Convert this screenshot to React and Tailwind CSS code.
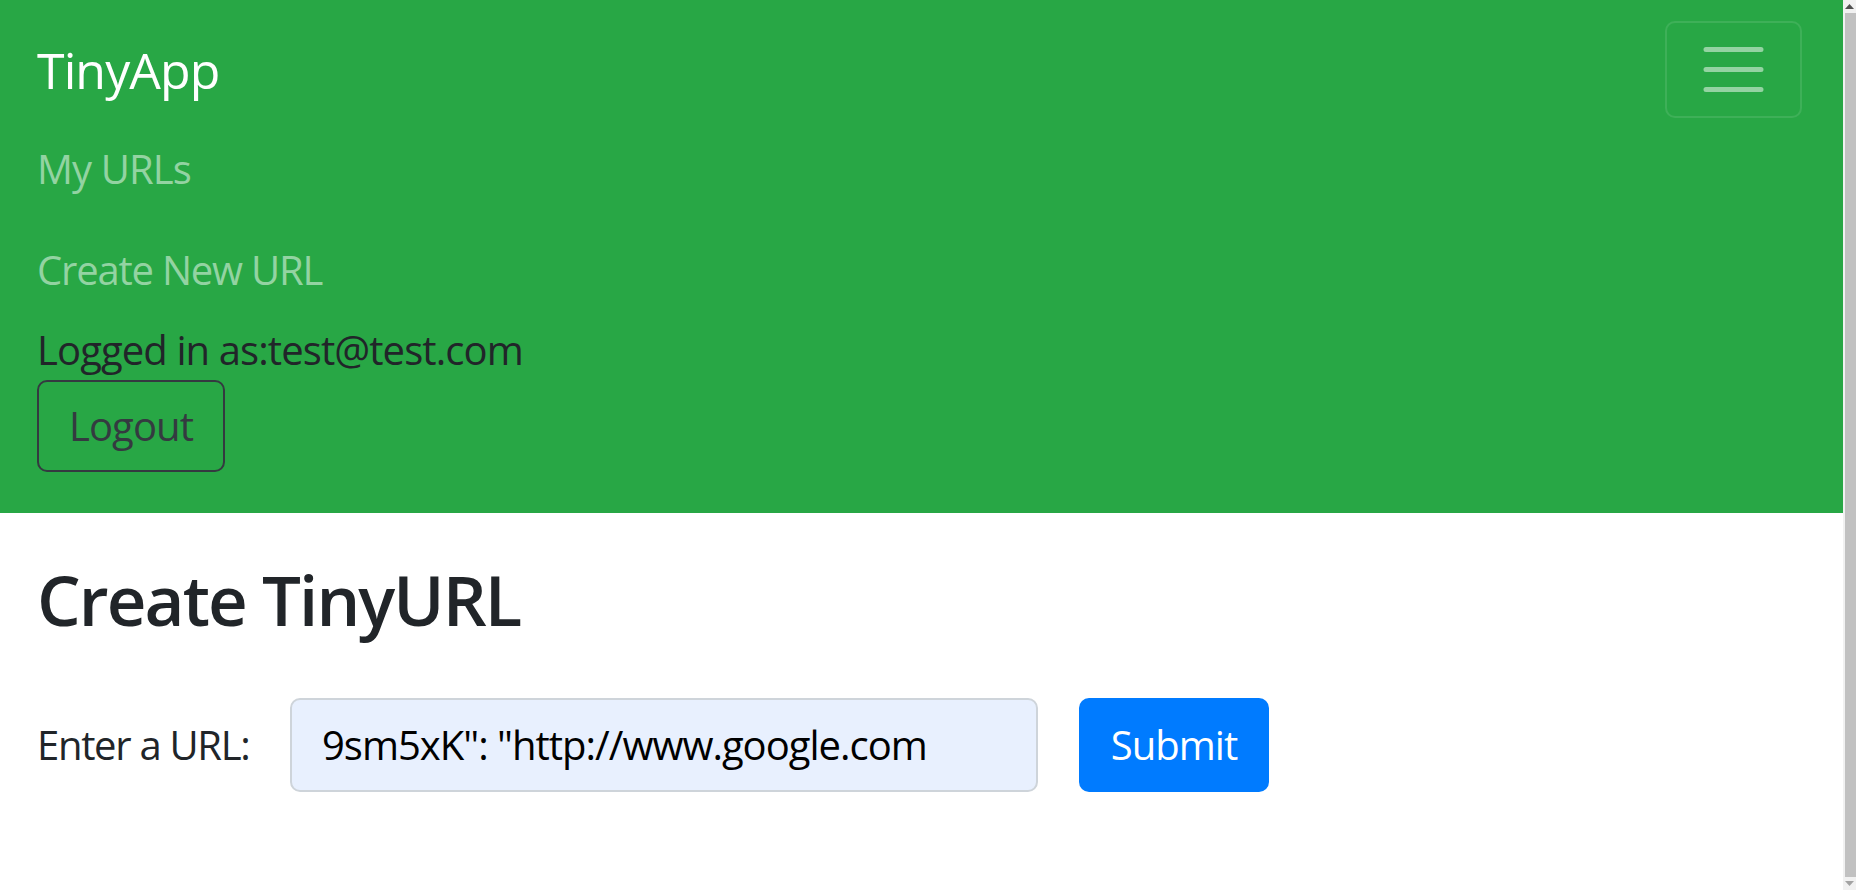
import React from "react";

const font = { fontFamily: '"Open Sans", "Noto Sans", sans-serif' };

function Toggler() {
  return (
    <button className="mt-px flex h-[97px] w-[137px] shrink-0 items-center justify-center rounded-[10px] border-[2.5px] border-white/10">
      <svg width="75" height="75" viewBox="0 0 30 30">
        <path d="M4 7h22M4 15h22M4 23h22" stroke="rgba(255,255,255,0.5)" strokeWidth="2" strokeLinecap="round" />
      </svg>
    </button>
  );
}

function Scrollbar() {
  return (
    <div className="flex h-[890px] w-[13px] shrink-0 flex-col bg-[#f1f1f1]">
      <div className="flex h-[13px] items-center justify-center">
        <svg width="9" height="5" viewBox="0 0 9 5"><path d="M4.5 0L9 5H0z" fill="#505050" /></svg>
      </div>
      <div className="ml-[2px] flex-1 bg-[#c1c1c1]" />
      <div className="flex h-[13px] items-center justify-center">
        <svg width="9" height="5" viewBox="0 0 9 5"><path d="M0 0h9L4.5 5z" fill="#a3a3a3" /></svg>
      </div>
    </div>
  );
}

export default function App() {
  return (
    <div className="flex h-[890px] w-full overflow-hidden bg-white text-[#212529]" style={font}>
      <div className="flex min-w-0 flex-1 flex-col">
        <nav className="bg-[#28a745] pb-[41px] pl-[37px] pr-[41px] pt-[20px]">
          <div className="flex items-start justify-between">
            <a className="pt-[13px] text-[50px] leading-[75px] tracking-[-0.9px] text-white">TinyApp</a>
            <Toggler />
          </div>
          <div className="flex flex-col text-[40px] leading-[60px] tracking-[-0.9px]">
            <a className="pb-[20px] pt-[21px] text-[#93d3a2]">My URLs</a>
            <a className="pb-[20px] pt-[21px] tracking-[-1.2px] text-[#93d3a2]">Create New URL</a>
            <div className="text-[#212529]">Logged in as:test@test.com</div>
            <button className="flex h-[92px] w-[188px] items-center justify-center rounded-[10px] border-[2.5px] border-[#343a40] text-[#343a40]">
              Logout
            </button>
          </div>
        </nav>
        <main className="pl-[37px]">
          <h1 className="mt-[44px] text-[69px] font-semibold leading-[84px] tracking-[-1.9px] text-[#212529]">Create TinyURL</h1>
          <div className="mt-[57px] flex items-center text-[40px] leading-[60px] tracking-[-1px]">
            <label className="w-[253px] shrink-0 tracking-[-1.3px] text-[#212529]">Enter a URL:</label>
            <div className="flex h-[94px] w-[748px] shrink-0 items-center rounded-[10px] border-[2.5px] border-[#ced4da] bg-[#e8f0fe] px-[30px] text-black">
              9sm5xK": "http://www.google.com
            </div>
            <button className="ml-[41px] flex h-[94px] w-[190px] shrink-0 items-center justify-center rounded-[10px] bg-[#007bff] text-white">
              Submit
            </button>
          </div>
        </main>
      </div>
      <Scrollbar />
    </div>
  );
}
